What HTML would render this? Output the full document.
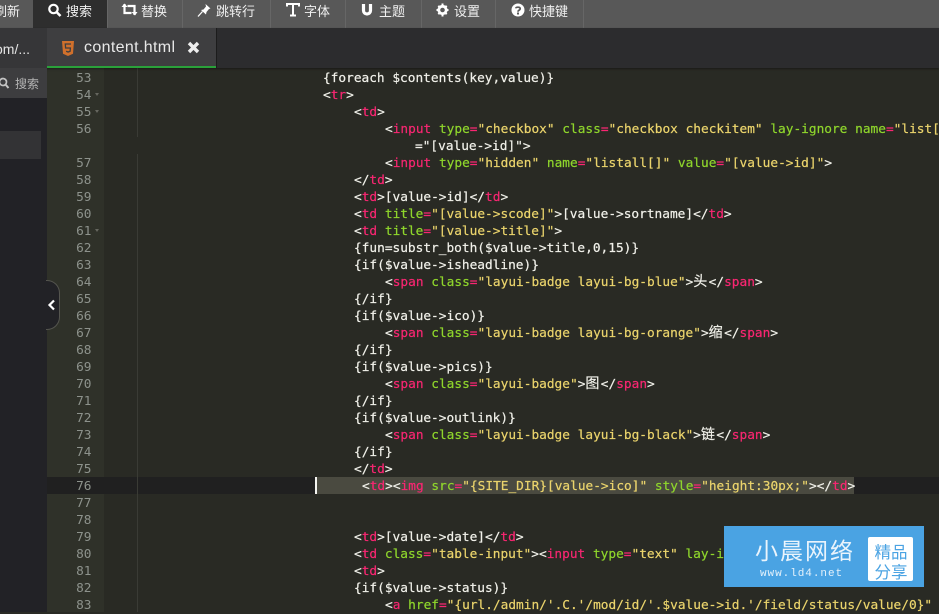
<!DOCTYPE html>
<html lang="zh"><head><meta charset="utf-8"><title>content.html</title>
<style>
html,body{margin:0;padding:0;width:939px;height:612px;overflow:hidden;background:#292a24}
*{box-sizing:border-box}
.abs{position:absolute}
#bar{position:absolute;left:0;top:0;width:939px;height:28px;background:#585858}
.sep{position:absolute;top:0;width:1px;height:28px;background:#666}
.tb{position:absolute;top:3px;height:18px;font:13px/18px "Liberation Sans","Noto Sans CJK SC",sans-serif;color:#f0f0f0;white-space:nowrap}
.ic{position:absolute}
#code div{position:absolute;height:17px;line-height:17px;white-space:pre;font-family:"DejaVu Sans Mono",monospace;font-size:12.8px;color:#f1f1ea;-webkit-text-stroke:.2px}
#code{position:absolute;left:0;top:1px}
.n{position:absolute;left:47px;margin-top:1px;width:44.5px;height:17px;line-height:17px;text-align:right;font-family:"DejaVu Sans Mono",monospace;font-size:12.8px;color:#8d928c}
.f{position:absolute;left:95px;width:0;height:0;border-left:2.5px solid transparent;border-right:2.5px solid transparent;border-top:3px solid #66675f}
b{font-weight:normal}
.t{color:#f92672}.a{color:#8fd62c}.e{color:#f92672}.s{color:#ebd46c}
.c{display:inline-block;width:15.4px;font-family:"Noto Sans CJK SC",sans-serif;font-size:14px;line-height:14px;color:#f1f1ea}
</style></head><body>

<div class="abs" style="left:47px;top:68px;width:57px;height:544px;background:#2f3129"></div>
<div class="abs" style="left:104px;top:68px;width:835px;height:544px;background:#292a24"></div>
<div class="abs" style="left:47px;top:477px;width:892px;height:17px;background:#202020"></div>
<div class="abs" style="left:315px;top:477px;width:539px;height:17px;background:#4a4a40"></div>
<div class="abs" style="left:315px;top:477px;width:2px;height:17px;background:#f4f4f0"></div>
<div class="abs" style="left:137px;top:68px;width:1px;height:69px;background:#3a3b35"></div>
<div class="abs" style="left:137px;top:154px;width:1px;height:458px;background:#3a3b35"></div>

<div id="bar">
<div class="abs" style="left:33px;top:0;width:74px;height:28px;background:#2e2e2e"></div>
<div class="sep" style="left:107px"></div><div class="sep" style="left:182px"></div><div class="sep" style="left:270px"></div><div class="sep" style="left:345px"></div><div class="sep" style="left:421px"></div><div class="sep" style="left:495px"></div><div class="sep" style="left:583px"></div>
<div class="tb" style="left:-6px">刷新</div>
<svg class="ic" style="left:47px;top:3px" width="16" height="14" viewBox="0 0 16 14"><circle cx="6.500" cy="6" r="4.200" fill="none" stroke="#fff" stroke-width="2.200"/><path d="M9.500 9l4 4" stroke="#fff" stroke-width="2.600"/></svg>
<div class="tb" style="left:66px">搜索</div>
<svg class="ic" style="left:121px;top:3px" width="17" height="13" viewBox="0 0 17 13"><path d="M3.500 1v9h7M13.500 12V3h-7" fill="none" stroke="#fff" stroke-width="2.200"/><path d="M0.500 4L3.500 .5 6.500 4zM10.500 9l3.500 3.500L16.500 9z" fill="#fff"/></svg>
<div class="tb" style="left:141px">替换</div>
<svg class="ic" style="left:197px;top:3px" width="15" height="14" viewBox="0 0 15 14"><path d="M8.500 1l5 4.500-1.500.5-2.500 3-.5 2.500-5-4.500 2.500-.5 2.500-3z" fill="#fff"/><path d="M5.500 8.500L1 13.500" stroke="#fff" stroke-width="1.300"/></svg>
<div class="tb" style="left:216px">跳转行</div>
<svg class="ic" style="left:286px;top:3px" width="14" height="14" viewBox="0 0 14 14"><path d="M1 3.500V1h12v2.500M7 1v11M4 12.500h6" fill="none" stroke="#fff" stroke-width="2"/></svg>
<div class="tb" style="left:304px">字体</div>
<svg class="ic" style="left:361px;top:3px" width="12" height="14" viewBox="0 0 12 14"><path d="M2.500 1v6.500a3.500 3.500 0 0 0 7 0V1" fill="none" stroke="#fff" stroke-width="3.200"/></svg>
<div class="tb" style="left:379px">主题</div>
<svg class="ic" style="left:436px;top:3px" width="13" height="14" viewBox="0 0 13 14"><circle cx="6.500" cy="7" r="3.700" fill="none" stroke="#fff" stroke-width="2.800"/><path d="M6.500 .5v13M.5 7h12M2.300 2.800l8.400 8.400M10.700 2.800l-8.400 8.400" stroke="#fff" stroke-width="2" stroke-dasharray="2.200 8.600 2.200"/></svg>
<div class="tb" style="left:454px">设置</div>
<svg class="ic" style="left:511px;top:3px" width="14" height="14" viewBox="0 0 14 14"><circle cx="7" cy="7" r="6.500" fill="#fff"/><path d="M4.800 5.300C5 3.800 9.200 3.700 9.200 5.700c0 1.500-2.200 1.400-2.200 3" fill="none" stroke="#585858" stroke-width="1.700"/><rect x="6" y="9.500" width="2" height="2" fill="#585858"/></svg>
<div class="tb" style="left:529px">快捷键</div>
</div>

<div class="abs" style="left:0;top:28px;width:939px;height:40px;background:#2c2c2e;box-shadow:0 1px 2px rgba(0,0,0,.4)"></div>
<div class="abs" style="left:0;top:28px;width:47px;height:40px;background:#363638"></div>
<div class="abs" style="left:-5px;top:39px;font:14px/20px 'Liberation Sans',sans-serif;color:#e4e4e4;white-space:nowrap">om/...</div>
<div class="abs" style="left:47px;top:28px;width:169px;height:40px;background:#3e3e40"></div>
<div class="abs" style="left:47px;top:66px;width:169px;height:2px;background:#2aa13a"></div>
<div class="abs" style="left:216px;top:28px;width:1px;height:40px;background:#1c1c1c"></div>
<svg class="abs" style="left:62px;top:41px" width="12" height="15" viewBox="0 0 12 15"><path d="M0 0h12l-1 12.800L6 15 1 12.800z" fill="#d0702c"/><path d="M9 3H3.300l.3 4h4.800l-.3 3.300-2 .7-2-.7" fill="none" stroke="#3e3e40" stroke-width="1.300"/></svg>
<div class="abs" style="left:84px;top:38px;font:16px/20px 'Liberation Sans',sans-serif;letter-spacing:.35px;color:#e8e8e8;white-space:nowrap">content.html</div>
<svg class="abs" style="left:187px;top:41px" width="13" height="13" viewBox="0 0 13 13"><path d="M2 2l9 9M11 2l-9 9" stroke="#eee" stroke-width="3.400"/></svg>

<div class="abs" style="left:0;top:68px;width:47px;height:544px;background:#222226"></div>
<div class="abs" style="left:0;top:68px;width:47px;height:30px;background:#3d3d3f"></div>
<svg class="abs" style="left:-2px;top:77px" width="12" height="13" viewBox="0 0 12 13"><circle cx="5" cy="5" r="3.500" fill="none" stroke="#c4c4c4" stroke-width="1.700"/><path d="M7.500 7.500l3 3.500" stroke="#c4c4c4" stroke-width="2"/></svg>
<div class="abs" style="left:15px;top:75px;font:12px/18px 'Liberation Sans','Noto Sans CJK SC',sans-serif;color:#b4b4b4">搜索</div>
<div class="abs" style="left:0;top:131px;width:41px;height:28px;background:#333335"></div>
<div class="abs" style="left:46px;top:280px;width:14px;height:50px;background:#222226;border:1px solid #55554f;border-left:0;border-radius:0 13px 13px 0"></div>
<svg class="abs" style="left:47px;top:299px" width="9" height="12" viewBox="0 0 9 12"><path d="M7 1.500L2.500 6 7 10.500" fill="none" stroke="#fff" stroke-width="2.200"/></svg>

<div class="n" style="top:69px">53</div><div class="n" style="top:86px">54</div><div class="n" style="top:103px">55</div><div class="n" style="top:120px">56</div><div class="n" style="top:154px">57</div><div class="n" style="top:171px">58</div><div class="n" style="top:188px">59</div><div class="n" style="top:205px">60</div><div class="n" style="top:222px">61</div><div class="n" style="top:239px">62</div><div class="n" style="top:256px">63</div><div class="n" style="top:273px">64</div><div class="n" style="top:290px">65</div><div class="n" style="top:307px">66</div><div class="n" style="top:324px">67</div><div class="n" style="top:341px">68</div><div class="n" style="top:358px">69</div><div class="n" style="top:375px">70</div><div class="n" style="top:392px">71</div><div class="n" style="top:409px">72</div><div class="n" style="top:426px">73</div><div class="n" style="top:443px">74</div><div class="n" style="top:460px">75</div><div class="n" style="top:477px">76</div><div class="n" style="top:494px">77</div><div class="n" style="top:511px">78</div><div class="n" style="top:528px">79</div><div class="n" style="top:545px">80</div><div class="n" style="top:562px">81</div><div class="n" style="top:579px">82</div><div class="n" style="top:596px">83</div>
<div class="f" style="top:93px"></div><div class="f" style="top:110px"></div><div class="f" style="top:229px"></div>

<div id="code">
<div style="left:323px;top:69px">{foreach $contents(key,value)}</div>
<div style="left:323px;top:86px">&lt;<b class="t">tr</b>&gt;</div>
<div style="left:354px;top:103px">&lt;<b class="t">td</b>&gt;</div>
<div style="left:385px;top:120px">&lt;<b class="t">input</b> <b class="a">type</b><b class="e">=</b><b class="s">"checkbox"</b> <b class="a">class</b><b class="e">=</b><b class="s">"checkbox checkitem"</b> <b class="a">lay-ignore</b> <b class="a">name</b><b class="e">=</b><b class="s">"list[</b></div>
<div style="left:415px;top:137px">="[value-&gt;id]"&gt;</div>
<div style="left:385px;top:154px">&lt;<b class="t">input</b> <b class="a">type</b><b class="e">=</b><b class="s">"hidden"</b> <b class="a">name</b><b class="e">=</b><b class="s">"listall[]"</b> <b class="a">value</b><b class="e">=</b><b class="s">"[value-&gt;id]"</b>&gt;</div>
<div style="left:354px;top:171px">&lt;/<b class="t">td</b>&gt;</div>
<div style="left:354px;top:188px">&lt;<b class="t">td</b>&gt;[value-&gt;id]&lt;/<b class="t">td</b>&gt;</div>
<div style="left:354px;top:205px">&lt;<b class="t">td</b> <b class="a">title</b><b class="e">=</b><b class="s">"[value-&gt;scode]"</b>&gt;[value-&gt;sortname]&lt;/<b class="t">td</b>&gt;</div>
<div style="left:354px;top:222px">&lt;<b class="t">td</b> <b class="a">title</b><b class="e">=</b><b class="s">"[value-&gt;title]"</b>&gt;</div>
<div style="left:354px;top:239px">{fun=substr_both($value-&gt;title,0,15)}</div>
<div style="left:354px;top:256px">{if($value-&gt;isheadline)}</div>
<div style="left:385px;top:273px">&lt;<b class="t">span</b> <b class="a">class</b><b class="e">=</b><b class="s">"layui-badge layui-bg-blue"</b>&gt;<span class="c">头</span>&lt;/<b class="t">span</b>&gt;</div>
<div style="left:354px;top:290px">{/if}</div>
<div style="left:354px;top:307px">{if($value-&gt;ico)}</div>
<div style="left:385px;top:324px">&lt;<b class="t">span</b> <b class="a">class</b><b class="e">=</b><b class="s">"layui-badge layui-bg-orange"</b>&gt;<span class="c">缩</span>&lt;/<b class="t">span</b>&gt;</div>
<div style="left:354px;top:341px">{/if}</div>
<div style="left:354px;top:358px">{if($value-&gt;pics)}</div>
<div style="left:385px;top:375px">&lt;<b class="t">span</b> <b class="a">class</b><b class="e">=</b><b class="s">"layui-badge"</b>&gt;<span class="c">图</span>&lt;/<b class="t">span</b>&gt;</div>
<div style="left:354px;top:392px">{/if}</div>
<div style="left:354px;top:409px">{if($value-&gt;outlink)}</div>
<div style="left:385px;top:426px">&lt;<b class="t">span</b> <b class="a">class</b><b class="e">=</b><b class="s">"layui-badge layui-bg-black"</b>&gt;<span class="c">链</span>&lt;/<b class="t">span</b>&gt;</div>
<div style="left:354px;top:443px">{/if}</div>
<div style="left:354px;top:460px">&lt;/<b class="t">td</b>&gt;</div>
<div style="left:362px;top:477px">&lt;<b class="t">td</b>&gt;&lt;<b class="t">img</b> <b class="a">src</b><b class="e">=</b><b class="s">"{SITE_DIR}[value-&gt;ico]"</b> <b class="a">style</b><b class="e">=</b><b class="s">"height:30px;"</b>&gt;&lt;/<b class="t">td</b>&gt;</div>
<div style="left:354px;top:528px">&lt;<b class="t">td</b>&gt;[value-&gt;date]&lt;/<b class="t">td</b>&gt;</div>
<div style="left:354px;top:545px">&lt;<b class="t">td</b> <b class="a">class</b><b class="e">=</b><b class="s">"table-input"</b>&gt;&lt;<b class="t">input</b> <b class="a">type</b><b class="e">=</b><b class="s">"text"</b> <b class="a">lay-ignore</b> <b class="a">class</b><b class="e">=</b><b class="s">"sorting"</b> <b class="a">name</b></div>
<div style="left:354px;top:562px">&lt;<b class="t">td</b>&gt;</div>
<div style="left:354px;top:579px">{if($value-&gt;status)}</div>
<div style="left:385px;top:596px">&lt;<b class="t">a</b> <b class="a">href</b><b class="e">=</b><b class="s">"{url./admin/'.C.'/mod/id/'.$value-&gt;id.'/field/status/value/0}"</b></div>
</div>

<div class="abs" style="left:724px;top:526px;width:200px;height:61px;background:#4aa3e3"></div>
<div class="abs" style="left:755px;top:533px;width:104px;font:23px/32px 'Noto Sans CJK SC',sans-serif;letter-spacing:2px;color:#eaf4fc;white-space:nowrap">小晨网络</div>
<div class="abs" style="left:760px;top:567px;font:11px/14px 'Liberation Mono',monospace;letter-spacing:.95px;color:#e4f1fb;white-space:nowrap">www.ld4.net</div>
<div class="abs" style="left:868px;top:537px;width:45px;height:44px;background:#fff;border-radius:2px"></div>
<div class="abs" style="left:873px;top:541px;width:36px;font:16.500px/20px 'Noto Sans CJK SC',sans-serif;color:#4aa3e3;text-align:center;white-space:nowrap">精品<br>分享</div>

</body></html>
